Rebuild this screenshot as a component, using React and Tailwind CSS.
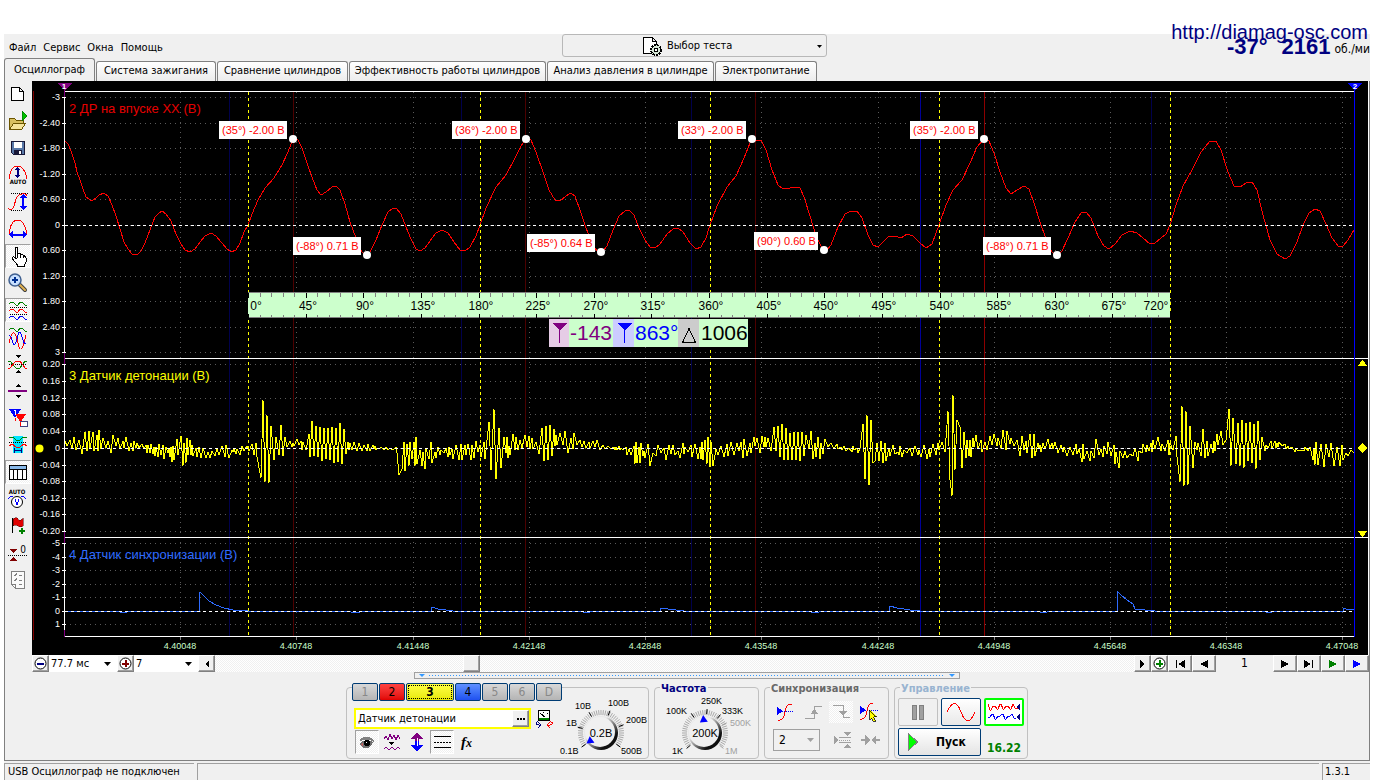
import React from "react";

const MENU = ["Файл", "Сервис", "Окна", "Помощь"];

const TABS = [
  { label: "Осциллограф", width: "w-[91px]" },
  { label: "Система зажигания", width: "w-[120px]" },
  { label: "Сравнение цилиндров", width: "w-[131px]" },
  { label: "Эффективность работы цилиндров", width: "w-[197px]" },
  { label: "Анализ давления в цилиндре", width: "w-[167px]" },
  { label: "Электропитание", width: "w-[102px]" },
];

const GRID_X = [180, 296, 413, 529, 645, 761, 878, 994, 1110, 1226, 1342];

const SCALES = [
  {
    ys: [97, 123, 148, 174, 199, 225, 250, 276, 301, 327, 352],
    labels: ["-3", "-2.40", "-1.80", "-1.20", "-0.60", "0", "0.60", "1.20", "1.80", "2.40", "3"],
    zero: 225,
  },
  {
    ys: [364, 381, 398, 414, 431, 448, 465, 481, 498, 514, 531],
    labels: ["0.20", "0.16", "0.12", "0.08", "0.04", "0", "-0.04", "-0.08", "-0.12", "-0.16", "-0.20"],
    zero: 448,
  },
  {
    ys: [543, 557, 570, 584, 597, 611, 624],
    labels: ["-5", "-4", "-3", "-2", "-1", "0", "1"],
    zero: 611,
  },
];

const TIMES = [
  "4.40048", "4.40748", "4.41448", "4.42148", "4.42848", "4.43548",
  "4.44248", "4.44948", "4.45648", "4.46348", "4.47048",
];

const PRESSURE = [
  [65, 141], [68, 144], [71, 151], [75, 163], [77, 172], [80, 180], [83, 189], [86, 197], [90, 200], [92, 201],
  [96, 198], [99, 195], [104, 193], [108, 196], [112, 205], [116, 216], [120, 229], [124, 242], [128, 249],
  [132, 254], [137, 255], [141, 251], [145, 243], [150, 230], [155, 217], [159, 213], [162, 211], [166, 214],
  [171, 221], [176, 234], [181, 244], [185, 250], [190, 252], [195, 249], [200, 242], [205, 236], [211, 233],
  [216, 236], [222, 243], [227, 249], [231, 252], [236, 250], [240, 243], [244, 232], [248, 225], [252, 214],
  [258, 200], [265, 188], [274, 178], [282, 165], [288, 152], [293, 139], [298, 140], [302, 148], [307, 163],
  [312, 177], [317, 190], [321, 195], [326, 192], [332, 187], [336, 186], [340, 190], [345, 204], [350, 222],
  [356, 238], [362, 252], [366, 256], [370, 252], [376, 240], [382, 225], [388, 212], [392, 209], [396, 208],
  [401, 214], [406, 227], [411, 239], [416, 249], [420, 251], [425, 248], [430, 241], [436, 233], [442, 230],
  [448, 233], [454, 242], [460, 250], [465, 251], [470, 247], [476, 236], [480, 225], [486, 208], [496, 187],
  [506, 175], [514, 160], [521, 146], [526, 139], [531, 140], [536, 152], [543, 172], [549, 190], [555, 200],
  [560, 201], [566, 196], [571, 193], [575, 196], [580, 210], [586, 228], [592, 243], [597, 251], [602, 252],
  [607, 246], [613, 230], [619, 216], [625, 211], [629, 210], [634, 215], [639, 228], [645, 240], [650, 247],
  [655, 248], [660, 244], [667, 234], [673, 229], [678, 228], [683, 232], [690, 243], [696, 249], [701, 247],
  [706, 238], [710, 225], [717, 206], [727, 187], [736, 176], [744, 158], [750, 143], [753, 140], [761, 140],
  [766, 150], [772, 170], [778, 185], [783, 189], [790, 188], [795, 187], [800, 188], [804, 197], [810, 216],
  [816, 236], [822, 248], [826, 251], [831, 245], [838, 227], [845, 214], [851, 211], [857, 211], [862, 218],
  [868, 235], [873, 245], [878, 247], [883, 242], [889, 236], [895, 236], [901, 238], [907, 234], [913, 236],
  [920, 243], [926, 248], [932, 244], [939, 225], [946, 205], [953, 190], [962, 180], [970, 163], [977, 147],
  [984, 139], [989, 141], [994, 153], [1000, 172], [1006, 188], [1011, 194], [1017, 190], [1024, 186],
  [1029, 189], [1034, 203], [1040, 222], [1046, 239], [1052, 252], [1057, 256], [1062, 251], [1068, 238],
  [1075, 222], [1081, 213], [1086, 212], [1091, 218], [1098, 236], [1104, 246], [1109, 249], [1115, 244],
  [1122, 235], [1130, 231], [1137, 233], [1143, 238], [1150, 244], [1155, 243], [1161, 238], [1166, 234],
  [1170, 225], [1176, 205], [1183, 186], [1192, 170], [1201, 152], [1210, 141], [1216, 141], [1221, 150],
  [1228, 172], [1234, 186], [1240, 187], [1246, 183], [1252, 182], [1257, 190], [1263, 215], [1270, 240],
  [1277, 254], [1285, 259], [1290, 256], [1297, 242], [1303, 225], [1309, 213], [1315, 209], [1320, 211],
  [1326, 224], [1332, 238], [1338, 246], [1343, 246], [1348, 240], [1354, 230],
];

// [x, upper y, lower y] of the knock signal
const KNOCK = [
  [65, 440, 449], [75, 436, 450], [85, 430, 455], [98, 430, 452], [110, 433, 458], [120, 437, 450],
  [130, 438, 452], [140, 444, 450], [150, 443, 456], [165, 442, 460], [175, 440, 464], [180, 434, 466],
  [190, 440, 465], [200, 447, 458], [215, 448, 459], [227, 442, 460], [232, 447, 455], [248, 444, 456],
  [255, 438, 455], [259, 430, 460], [261, 412, 478], [268, 412, 484], [271, 425, 480],
  [275, 432, 460], [283, 421, 459], [288, 440, 450], [300, 438, 450], [308, 438, 450], [310, 418, 462],
  [315, 422, 462], [330, 423, 464], [343, 422, 470], [346, 426, 458], [348, 442, 452], [355, 442, 451],
  [390, 447, 451], [398, 446, 454], [400, 441, 475], [407, 444, 470], [416, 438, 468], [430, 442, 468],
  [440, 446, 457], [460, 442, 464], [480, 442, 456], [487, 432, 460], [489, 420, 470], [496, 412, 479],
  [499, 426, 468], [505, 438, 462], [517, 432, 453], [525, 433, 455], [535, 440, 452], [541, 434, 456],
  [543, 420, 461], [549, 421, 463], [555, 430, 455], [567, 427, 453], [576, 432, 453], [583, 441, 451],
  [600, 440, 450], [610, 446, 450], [625, 446, 453], [636, 441, 466], [645, 442, 466], [652, 446, 465],
  [660, 442, 460], [675, 444, 460], [692, 444, 458], [704, 440, 465], [715, 436, 466], [720, 446, 455],
  [730, 441, 458], [738, 436, 462], [746, 436, 463], [752, 431, 456], [760, 435, 453], [767, 430, 452],
  [776, 422, 456], [783, 424, 466], [792, 431, 463], [801, 429, 461], [812, 433, 459], [820, 439, 459],
  [830, 440, 450], [845, 446, 453], [860, 446, 453], [862, 424, 466], [866, 415, 484], [870, 418, 485],
  [873, 422, 463], [877, 440, 462], [883, 434, 467], [888, 442, 463], [900, 446, 460], [912, 446, 456],
  [920, 447, 460], [935, 440, 457], [946, 442, 457], [948, 412, 470], [956, 410, 486],
  [961, 424, 474], [965, 434, 460], [975, 434, 455], [980, 440, 456], [993, 434, 450], [1007, 430, 450],
  [1015, 431, 453], [1022, 432, 456], [1032, 429, 463], [1040, 439, 453], [1050, 439, 449], [1060, 443, 458],
  [1070, 444, 455], [1080, 443, 461], [1090, 440, 467], [1100, 440, 465], [1109, 440, 460], [1117, 446, 468],
  [1130, 448, 463], [1145, 443, 458], [1158, 438, 455], [1170, 437, 459], [1177, 434, 462], [1180, 414, 480],
  [1187, 411, 486], [1192, 426, 475], [1196, 440, 455], [1202, 422, 461], [1210, 440, 456],
  [1220, 431, 450], [1227, 438, 456], [1229, 412, 468], [1240, 420, 468], [1247, 417, 468], [1259, 420, 472],
  [1262, 426, 455], [1266, 441, 452], [1280, 441, 449], [1290, 446, 451], [1300, 448, 454], [1310, 445, 451],
  [1316, 441, 471], [1320, 444, 472], [1332, 440, 465], [1343, 446, 468], [1354, 446, 457],
];

// tallest strokes of each knock
const PEAKS = [
  [261, 478], [263, 400], [265, 482], [267, 415], [269, 483], [271, 426],
  [489, 422], [491, 470], [494, 409], [496, 479], [499, 428], [501, 468],
  [863, 424], [865, 479], [867, 415], [869, 485], [871, 420], [873, 463],
  [948, 411], [950, 480], [953, 395], [955, 470], [957, 420], [952, 496],
  [1180, 482], [1182, 406], [1184, 486], [1186, 411], [1188, 485], [1190, 426],
  [1229, 409], [1231, 466], [1233, 418], [399, 475],
];

const YELLOW_X = [248, 480, 710, 939, 1170];

const MARKS = [
  { x: 219, y: 121, dot: [293, 139], text: "(35°) -2.00 В" },
  { x: 452, y: 121, dot: [526, 139], text: "(36°) -2.00 В" },
  { x: 678, y: 121, dot: [752, 139], text: "(33°) -2.00 В" },
  { x: 910, y: 121, dot: [984, 139], text: "(35°) -2.00 В" },
  { x: 293, y: 237, dot: [367, 255], text: "(-88°) 0.71 В" },
  { x: 527, y: 234, dot: [601, 252], text: "(-85°) 0.64 В" },
  { x: 754, y: 232, dot: [824, 250], text: "(90°) 0.60 В" },
  { x: 983, y: 237, dot: [1057, 255], text: "(-88°) 0.71 В" },
];

const toPoints = (list) => list.map((p) => p.join(",")).join(" ");

const knockPoints = () => {
  const out = [];
  let seg = 0;
  let seed = 7;
  let up = true;
  let x = 65;
  while (x <= 1354) {
    while (seg < KNOCK.length - 2 && KNOCK[seg + 1][0] < x) seg++;
    const a = KNOCK[seg];
    const b = KNOCK[seg + 1];
    const t = Math.min(1, (x - a[0]) / (b[0] - a[0]));
    const top = a[1] + (b[1] - a[1]) * t;
    const bottom = a[2] + (b[2] - a[2]) * t;
    const mid = (top + bottom) / 2;
    const burst = bottom - top > 30;
    seed = (seed * 16807) % 2147483647;
    const r = (seed % 1000) / 1000;
    const k = burst ? 0.7 + 0.3 * r : 0.15 + 0.95 * r;
    const at = x;
    const inPeak = PEAKS.some((p) => Math.abs(p[0] - at) < 2);
    if (!inPeak) out.push([x, Math.round(up ? mid - (mid - top) * k : mid + (bottom - mid) * k)]);
    up = !up;
    seed = (seed * 16807) % 2147483647;
    x += burst ? 2 : 1 + (seed % 3);
  }
  return toPoints([...out, ...PEAKS].sort((p, q) => p[0] - q[0]));
};

const VLine = ({ x, color, y1 = 92, y2 = 636, dash }) => (
  <line x1={x + 0.5} x2={x + 0.5} y1={y1} y2={y2} stroke={color} strokeDasharray={dash} />
);

const HLine = ({ y, color, x1 = 65, x2 = 1354, dash }) => (
  <line x1={x1} x2={x2} y1={y + 0.5} y2={y + 0.5} stroke={color} strokeDasharray={dash} />
);

function Ruler() {
  const minor = [];
  for (let i = 0; i <= 80; i++) minor.push(Math.round(248 + i * 11.525));
  return (
    <g>
      <rect x="248" y="292" width="922" height="26" fill="#ccffcc" />
      <HLine y={292} x1={248} x2={1170} color="#808080" />
      <HLine y={317} x1={248} x2={1170} color="#808080" />
      {minor.map((x, i) => (
        <g key={i}>
          <VLine x={x} y1={293} y2={i % 5 ? 297 : 298} color={i % 5 ? "#808080" : "#000"} />
          <VLine x={x} y1={i % 5 ? 315 : 314} y2={318} color={i % 5 ? "#808080" : "#000"} />
        </g>
      ))}
      <g fontSize="12" fill="#000" textAnchor="middle">
        {minor.filter((x, i) => i % 5 === 0).map((x, i) => (
          <text key={i} x={i === 0 ? 256 : i === 16 ? 1156 : x + 2} y="310">
            {i * 45}°
          </text>
        ))}
      </g>
    </g>
  );
}

function Readout() {
  return (
    <g fontSize="21">
      <rect x="549" y="319" width="199" height="28" fill="#ccffcc" />
      <rect x="549" y="319" width="20" height="28" fill="#e6cce6" />
      <rect x="613" y="319" width="21" height="28" fill="#ccccff" />
      <path d="M552 323h15l-7 7v13h-1v-13z" fill="#800080" />
      <text x="570" y="340" fill="#800080">-143</text>
      <path d="M617 323h15l-7 7v13h-1v-13z" fill="#0000ff" />
      <text x="635" y="340" fill="#0000ff">863°</text>
      <rect x="678" y="319" width="21" height="28" fill="#cccccc" />
      <path d="M682.500 342.500h13l-6.500-14z" fill="none" stroke="#000" />
      <text x="701" y="340" fill="#000">1006</text>
    </g>
  );
}

function Chart() {
  return (
    <svg
      viewBox="32 81 1336 574"
      className="block h-auto w-full bg-black font-['Liberation_Sans',sans-serif]"
      shapeRendering="crispEdges"
      role="img"
      aria-label="Осциллограмма"
    >
      {SCALES.map((s) => s.ys.map((y) => <HLine key={y} y={y} x1={70} color="#5a5a5a" dash="1 4" />))}
      {GRID_X.map((x) => <VLine key={x} x={x} color="#5a5a5a" dash="1 4" />)}
      {[229, 461, 691, 920, 1151].map((x) => (
        <VLine key={x} x={x} color={x === 920 ? "#000099" : "#00004c"} />
      ))}
      {[293, 525, 755, 984].map((x) => (
        <VLine key={x} x={x} color={x === 984 ? "#8c0000" : "#4c0000"} />
      ))}
      <VLine x={33} y1={91} y2={640} color="#800000" />

      <polyline
        points="65,611 119,611 120,612 127,612 128,611 199,611 200,592 204,596 209,601 216,605 224,608 233,610 248,611 350,611 351,612 360,612 361,611 431,611 432,607 438,609 446,610 453,611 582,611 583,612 590,612 591,611 660,611 661,608 668,609 676,610 684,611 810,611 811,612 819,612 820,611 889,611 890,606 897,608 904,609 910,610 920,611 1039,611 1040,612 1047,612 1048,611 1117,611 1117,591 1121,595 1127,600 1133,604 1135,609 1155,611 1265,611 1266,612 1272,612 1273,611 1343,611 1343,608 1346,609 1354,609"
        fill="none"
        stroke="#2e6bff"
      />
      <polyline points={toPoints(PRESSURE)} fill="none" stroke="#ff0000" />
      <polyline points={knockPoints()} fill="none" stroke="#ffff00" strokeLinejoin="bevel" />

      {SCALES.map((s) => <HLine key={s.zero} y={s.zero} color="#fff" dash="3 3" />)}
      {YELLOW_X.map((x) => <VLine key={x} x={x} color="#ffff00" dash="3 3" />)}

      <HLine y={91} x1={64} color="#fff" />
      <HLine y={358} x1={64} x2={1368} color="#fff" />
      <HLine y={537} x1={64} x2={1368} color="#fff" />
      <HLine y={636} x1={64} color="#fff" />
      <VLine x={64} color="#fff" />
      <VLine x={64} y1={84} y2={97} color="#800080" />
      <VLine x={64} y1={352} y2={364} color="#800080" />
      <VLine x={64} y1={532} y2={543} color="#800080" />
      <VLine x={64} y1={630} y2={637} color="#800080" />
      <line x1="1354.5" x2="1354.5" y1="84" y2="637" stroke="#0000ff" />
      <path d="M57 83h15l-7 7h-1z" fill="#800080" />
      <path d="M1347 83h15l-7 7h-1z" fill="#0000ff" />
      <g fontSize="8" fontWeight="700" fill="#fff" textAnchor="middle">
        <text x="64" y="89">1</text>
        <text x="1355" y="89">2</text>
      </g>

      <g fontSize="9" fill="#fff" textAnchor="end">
        {SCALES.map((s) =>
          s.ys.map((y, i) => (
            <g key={y}>
              <HLine y={y} x1={62} x2={66} color="#fff" />
              <text x="60" y={y + 3}>{s.labels[i]}</text>
            </g>
          )),
        )}
      </g>
      <g fontSize="9" fill="#ccffcc" textAnchor="middle">
        {GRID_X.map((x, i) => (
          <g key={x}>
            <VLine x={x} y1={637} y2={640} color="#808080" />
            <text x={x} y="649">{TIMES[i]}</text>
          </g>
        ))}
      </g>

      <g fontSize="13">
        <text x="69" y="113" fill="#e60000">2 ДР на впуске XX (В)</text>
        <text x="69" y="380" fill="#ffff00">3 Датчик детонации (В)</text>
        <text x="69" y="559" fill="#2e6bff">4 Датчик синхронизации (В)</text>
      </g>

      {MARKS.map((m) => (
        <g key={m.x}>
          <rect x={m.x} y={m.y} width={m.text.length === 12 ? 64 : 68} height="18" fill="#fff" />
          <text x={m.x + 3} y={m.y + 13} fontSize="11" fill="#ff0000">{m.text}</text>
          <circle cx={m.dot[0]} cy={m.dot[1]} r="4" fill="#fff" shapeRendering="auto" />
        </g>
      ))}

      <Ruler />
      <Readout />

      <circle cx="39.500" cy="448.500" r="4" fill="#ffff00" shapeRendering="auto" />
      <path d="M1358 366h9l-4-6h-1z" fill="#ffff00" />
      <path d="M1362.500 443l5 5-5 5-5-5z" fill="#ffff00" />
      <path d="M1358 531h9l-4 6h-1z" fill="#ffff00" />
    </svg>
  );
}

const WAVE = "l2-2h2l3 3h2l2-3h2l3 3h2";

const TOOLS = [
  {
    name: "Новый",
    art: <path d="M5.500 5.500h8l4 4v9h-12zM13.500 5.500v4h4" fill="#fff" stroke="#000" />,
  },
  {
    name: "Открыть",
    art: (
      <>
        <path d="M3.500 20.500v-11h5l2 2h7v3" fill="#d8c060" stroke="#6b5500" />
        <path d="M3.500 20.500l4-6h12l-4 6z" fill="#f5e49a" stroke="#6b5500" />
        <path d="M16 2l5 5-5 5z" fill="#00c000" stroke="#006000" strokeWidth="0.500" />
      </>
    ),
  },
  {
    name: "Сохранить",
    art: (
      <>
        <path d="M5.500 5.500h13v13h-11l-2-2z" fill="#5878a8" stroke="#181838" />
        <rect x="8" y="6" width="8" height="6" fill="#fff" />
        <rect x="8" y="14" width="8" height="4" fill="#181838" />
        <rect x="13" y="15" width="2" height="3" fill="#fff" />
      </>
    ),
  },
  {
    name: "Авто масштаб",
    art: (
      <>
        <path d="M3.500 16v-3q2-10 8-10t9 10v3" fill="none" stroke="#f00" />
        <path d="M11.500 4l3 3h-2v5h2l-3 3-3-3h2v-5h-2z" fill="#000080" />
        <text x="12" y="21" fontSize="6" fontWeight="700" textAnchor="middle">AUTO</text>
      </>
    ),
  },
  {
    name: "По вертикали",
    art: (
      <>
        <path d="M5 3.500h17M5 20.500h11" stroke="#000" strokeDasharray="1 1" />
        <path d="M2 18q2 3 4 1c4-3 2-14 10-15q4-1 5 2" fill="none" stroke="#f00" />
        <path d="M17 4l4 4h-3v8h3l-4 4-4-4h3v-8h-3z" fill="#00f" />
      </>
    ),
  },
  {
    name: "По горизонтали",
    art: (
      <>
        <path d="M3.500 17v-3q2-11 8-11t9 11v3" fill="none" stroke="#f00" />
        <path d="M3 17.500l4-4v3h10v-3l4 4-4 4v-3h-10v3z" fill="#00f" />
      </>
    ),
  },
  {
    name: "Рука",
    pressed: true,
    art: (
      <path
        d="M9.500 14.500v-10q0-1 1-1t1 1v6q0-1 1.500-1t1.500 1.500q0-1 1.500-.5t1.500 1.500q0-1 1 0t1.500 2v4l-1.500 3v1h-7v-1l-5-6q-1-1.500.5-2t3 1.500zM11.500 10v4M14.500 11v3M17.500 12v2"
        fill="#fff"
        stroke="#000"
      />
    ),
  },
  {
    name: "Увеличить",
    art: (
      <g shapeRendering="auto">
        <path d="M13 13l6 6" stroke="#404040" strokeWidth="4" strokeLinecap="round" />
        <path d="M14 14l5 5" stroke="#e0b050" strokeWidth="2" strokeLinecap="round" />
        <circle cx="9" cy="9" r="6" fill="#c8e0ff" stroke="#406090" strokeWidth="1.500" />
        <path d="M9 6v6M6 9h6" stroke="#003090" strokeWidth="2" />
      </g>
    ),
  },
  {
    name: "Разделить каналы",
    pressed: true,
    art: (
      <g fill="none">
        <path d={"M3 6" + WAVE} stroke="#008000" />
        <path d="M4 9.500h17M4 16.500h17" stroke="#000" strokeDasharray="1 1" />
        <path d={"M3 13" + WAVE} stroke="#f00" />
        <path d={"M3 20" + WAVE} stroke="#00f" />
      </g>
    ),
  },
  {
    name: "Совместить каналы",
    art: (
      <g fill="none">
        <path d={"M3 5" + WAVE} stroke="#008000" />
        <path d="M3 18c3-14 6-14 9 0s5 3 8-8" stroke="#f00" />
        <path d="M3 11c3-2 3 11 6 8s3-17 6-10 2 10 5 10" stroke="#00f" />
      </g>
    ),
  },
  {
    name: "Наложить",
    art: (
      <g fill="none">
        <path d="M9 3h6l-3 3zM9 21h6l-3-3z" fill="#000" />
        <path d="M3 12.500h18" stroke="#000" strokeDasharray="1 1" />
        <path d="M2 9h2l6 7h4l5-7h2" stroke="#008000" />
        <path d="M2 16h2l6-7h4l5 7h2" stroke="#f00" />
      </g>
    ),
  },
  {
    name: "Сдвиг",
    art: (
      <>
        <path d="M9 8h6l-3-3zM9 16h6l-3 3z" fill="#000" />
        <rect x="2" y="11" width="19" height="2" fill="#800080" />
      </>
    ),
  },
  {
    name: "Маркеры",
    art: (
      <>
        <path d="M3 3h12l-6 9z" fill="#00f" />
        <path d="M9 8h11l-5.500 8z" fill="#f00" />
        <path d="M8 4.500h1.500v4" fill="none" stroke="#fff" />
        <rect x="14.500" y="15.500" width="7" height="5" fill="#fff" stroke="#404080" />
        <path d="M9.500 12v3M14 16v4" stroke="#f00" />
      </>
    ),
  },
  {
    name: "Фаза",
    art: (
      <g fill="none">
        <rect x="7" y="3" width="10" height="17" fill="#00e5ff" />
        <path d="M3 4h4l3 3h4l3-3h4" stroke="#008000" />
        <path d="M3 9.500h18" stroke="#000" strokeDasharray="1 1" />
        <path d="M3 13l3-2 4 3h4l4-3 3 2" stroke="#f00" />
        <path d="M8 17.500h8M8.500 15v5M15.500 15v5" stroke="#000080" />
      </g>
    ),
  },
  {
    name: "Таблица",
    pressed: true,
    art: (
      <>
        <rect x="3.500" y="5.500" width="17" height="14" fill="#fff" stroke="#000" />
        <rect x="4" y="6" width="16" height="3" fill="#88b8e8" />
        <path d="M3 9.500h17M7.500 9v10M11.500 9v10M16.500 9v10" stroke="#000" />
      </>
    ),
  },
  {
    name: "Авто вольтметр",
    art: (
      <>
        <text x="11" y="7" fontSize="6" fontWeight="700" textAnchor="middle">AUTO</text>
        <path d="M2 12q2-3 5-3M20 12q-2-3-5-3" fill="none" stroke="#00f" />
        <circle cx="11" cy="15" r="5.500" fill="#fff" stroke="#000" shapeRendering="auto" />
        <path d="M9 12.500l2 5 2-5" fill="none" stroke="#00f" />
      </>
    ),
  },
  {
    name: "Флаг",
    art: (
      <>
        <path d="M6.500 4v15" stroke="#000" />
        <path d="M7 5q3-3 5 0t5-1v8q-3 2-5 0t-5 0z" fill="#e00000" stroke="#400" strokeWidth="0.500" />
        <path d="M15.500 14v6M12.500 17h6" stroke="#008000" strokeWidth="2" />
      </>
    ),
  },
  {
    name: "Ноль",
    art: (
      <>
        <path d="M3 8h8l-4 4zM3 20h8l-4-4z" fill="#800000" />
        <path d="M2 14.500h19" stroke="#000" strokeDasharray="1 1" />
        <text x="17" y="12" fontSize="10" textAnchor="middle">0</text>
      </>
    ),
  },
  {
    name: "Список",
    art: (
      <path
        d="M5.500 3.500h13v17h-9l-4-4zM5.500 16.500h4v4M8 7l1 1 2-3M8 12l1 1 2-3M13 7.500h3M13 12.500h3M13 16.500h3"
        fill="#fafafa"
        stroke="#808080"
      />
    ),
  },
];

const SUNKEN =
  "border border-t-[#a0a0a0] border-l-[#a0a0a0] border-r-white border-b-white bg-[repeating-conic-gradient(#fff_0_25%,#f0f0f0_0_50%)] bg-[length:2px_2px]";

const Icon = ({ w = 24, h = 24, children }) => (
  <svg width={w} height={h} viewBox={`0 0 ${w} ${h}`} shapeRendering="crispEdges" className="shrink-0" aria-hidden="true">
    {children}
  </svg>
);

function Toolbar() {
  return (
    <div className="flex w-[27px] shrink-0 flex-col gap-[3px] pt-px pr-px">
      {TOOLS.map((t) => (
        <button
          key={t.name}
          type="button"
          aria-label={t.name}
          className={
            "flex h-6 items-center justify-center " + (t.pressed ? SUNKEN : "")
          }
        >
          <Icon>{t.art}</Icon>
        </button>
      ))}
    </div>
  );
}

const RaisedButton = ({ label, width = "w-6", children }) => (
  <button
    type="button"
    aria-label={label}
    className={
      "flex h-[17px] shrink-0 items-center justify-center border border-t-white border-l-white border-r-[#808080] border-b-[#808080] bg-[#f0f0f0] shadow-[inset_-1px_-1px_0_#a0a0a0] " + width
    }
  >
    {children}
  </button>
);

const RoundSign = ({ color, plus }) => (
  <Icon w={13} h={13}>
    <circle cx="6.500" cy="6.500" r="5.500" fill="#fff" stroke="#000" shapeRendering="auto" />
    <path d={plus ? "M3 6.500h7M6.500 3v7" : "M3 6.500h7"} stroke={color} strokeWidth="2" />
  </Icon>
);

function Combo({ label, value, className }) {
  return (
    <div className={"relative shrink-0 " + className}>
      <select
        aria-label={label}
        defaultValue={value}
        className="h-[17px] w-full appearance-none bg-white px-[2px] text-[11px] leading-[17px]"
      >
        <option>{value}</option>
      </select>
      <svg width="7" height="4" className="pointer-events-none absolute top-[7px] right-[6px]" aria-hidden="true">
        <path d="M0 0h7l-3.500 4z" />
      </svg>
    </div>
  );
}

function Transport() {
  return (
    <div className="flex h-[17px]">
      <RaisedButton label="Уменьшить" width="w-[17px]"><RoundSign color="#000080" /></RaisedButton>
      <Combo label="Развёртка" value="77.7 мс" className="w-[68px]" />
      <RaisedButton label="Увеличить" width="w-[17px]"><RoundSign color="#800000" plus /></RaisedButton>
      <Combo label="Масштаб" value="7" className="w-16" />
      <RaisedButton label="Влево" width="w-[17px]">
        <Icon w={5} h={8}><path d="M5 0v8l-4-4z" /></Icon>
      </RaisedButton>
      <div className="flex min-w-0 flex-1 bg-[repeating-conic-gradient(#fff_0_25%,#f0f0f0_0_50%)] bg-[length:2px_2px]">
        <div className="w-[27%] shrink-0" />
        <RaisedButton label="Прокрутка" width="w-[17px]" />
      </div>
      <RaisedButton label="Вправо" width="w-[17px]">
        <Icon w={5} h={8}><path d="M0 0v8l4-4z" /></Icon>
      </RaisedButton>
      <RaisedButton label="Добавить" width="w-[17px]"><RoundSign color="#008000" plus /></RaisedButton>
      <RaisedButton label="В начало">
        <Icon w={12} h={8}><path d="M2 0h1v8h-1zM11 0v8l-7-4z" /></Icon>
      </RaisedButton>
      <RaisedButton label="Назад">
        <Icon w={8} h={8}><path d="M8 0v8l-8-4z" /></Icon>
      </RaisedButton>
      <output className="w-[57px] shrink-0 text-center text-[12px] leading-[17px]">1</output>
      <RaisedButton label="Вперёд">
        <Icon w={8} h={8}><path d="M0 0v8l8-4z" /></Icon>
      </RaisedButton>
      <RaisedButton label="В конец">
        <Icon w={12} h={8}><path d="M9 0h1v8h-1zM1 0v8l7-4z" /></Icon>
      </RaisedButton>
      <RaisedButton label="Воспроизвести">
        <Icon w={8} h={8}><path d="M0 0v8l8-4z" fill="#008000" /></Icon>
      </RaisedButton>
      <RaisedButton label="Непрерывно">
        <Icon w={8} h={8}><path d="M0 0v8l8-4z" fill="#0000ff" /></Icon>
      </RaisedButton>
    </div>
  );
}

const CHANNELS = [
  { id: "1", cls: "w-[26px] bg-linear-to-b from-[#d8d8d8] to-[#b4b4b4] text-[#888]" },
  { id: "2", cls: "w-[26px] bg-linear-to-b from-[#ff4040] to-[#e00000] text-black" },
  { id: "3", cls: "w-12 bg-linear-to-b from-[#ffff40] to-[#e8e800] text-black font-bold outline-1 -outline-offset-3 outline-dotted outline-black" },
  { id: "4", cls: "w-[26px] bg-linear-to-b from-[#6090ff] to-[#2050f0] text-black" },
  { id: "5", cls: "w-[26px] bg-linear-to-b from-[#d8d8d8] to-[#b4b4b4] text-[#888]" },
  { id: "6", cls: "w-[26px] bg-linear-to-b from-[#d8d8d8] to-[#b4b4b4] text-[#888]" },
  { id: "D", cls: "w-[26px] bg-linear-to-b from-[#d8d8d8] to-[#b4b4b4] text-[#888]" },
];

const GROUP = "flex h-18 rounded-[4px] border border-[#c0c0c0]";

function Knob({ cx, cy, r, value, from, to, pointer, labels, width }) {
  const ticks = [];
  for (let a = from; a <= to; a += 6) ticks.push(a);
  const polar = (a, d) => [cx + d * Math.sin((a * Math.PI) / 180), cy - d * Math.cos((a * Math.PI) / 180)];
  const [px, py] = polar(pointer, r - 3);
  return (
    <svg
      width={width}
      height="70"
      viewBox={`0 0 ${width} 70`}
      className="shrink-0 overflow-visible font-['Liberation_Sans',sans-serif]"
      role="img"
      aria-label={value}
    >
      <defs>
        <linearGradient id={"edge" + width} x1="0" y1="0" x2="1" y2="1">
          <stop offset="0.350" stopColor="#e8e8e8" />
          <stop offset="0.750" stopColor="#101010" />
        </linearGradient>
      </defs>
      {ticks.map((a) => {
        const [x1, y1] = polar(a, r + 1);
        const [x2, y2] = polar(a, r + 6);
        return <line key={a} x1={x1} y1={y1} x2={x2} y2={y2} stroke="#a8a8a8" />;
      })}
      {labels.map((l) => {
        const [x1, y1] = polar(l.a, r + 2);
        const [x2, y2] = polar(l.a, r + 7);
        return (
          <g key={l.t}>
            <line x1={x1} y1={y1} x2={x2} y2={y2} stroke={l.off ? "#a0a0a0" : "#000"} />
            <text x={l.x} y={l.y} fontSize="9" fill={l.off ? "#a0a0a0" : "#000"}>{l.t}</text>
          </g>
        );
      })}
      <circle cx={cx} cy={cy} r={r} fill={`url(#edge${width})`} />
      <circle cx={cx - 1} cy={cy - 1} r={r - 2} fill="#f0f0f0" />
      <path d="M0-4l4 7h-8z" fill="#0000ff" transform={`translate(${px} ${py}) rotate(${pointer})`} />
      <text x={cx} y={cy + 4} fontSize="11" textAnchor="middle">{value}</text>
    </svg>
  );
}

function ChannelGroup() {
  return (
    <section className={GROUP + " w-[303px]"}>
      <div className="flex w-[214px] shrink-0 flex-col">
        <div className="-mt-[5px] ml-[5px] flex gap-px bg-[#f0f0f0]">
          {CHANNELS.map((c) => (
            <button
              key={c.id}
              type="button"
              className={"h-[18px] shrink-0 rounded-[2px] border border-[#003c74] text-[12px] leading-4 " + c.cls}
            >
              {c.id}
            </button>
          ))}
        </div>
        <div className="mt-[7px] ml-[7px] flex items-center gap-1">
          <div className="flex h-[21px] w-[177px] items-center border-2 border-[#ffff00] bg-white">
            <input
              aria-label="Название канала"
              defaultValue="Датчик детонации"
              className="h-[17px] min-w-0 flex-1 bg-white pl-[2px] text-[11px] outline-none"
            />
            <RaisedButton label="Выбрать датчик" width="w-[17px]">
              <Icon w={8} h={2}><path d="M0 0h2v2h-2zM3 0h2v2h-2zM6 0h2v2h-2z" /></Icon>
            </RaisedButton>
          </div>
          <button type="button" aria-label="Заменить прибор">
            <Icon w={19} h={20}>
              <path d="M3.500 1.500h11v10h-11z" fill="#fff" stroke="#000" />
              <path d="M4 9h10v2h-10z" fill="#008000" />
              <path d="M9.500 8l-3-3M5 4h1M8 3h1M12 4h1" stroke="#000" />
              <path d="M3 12q-4 3 1 4h2M3 13l3 3-3 3" fill="none" stroke="#000080" />
              <path d="M15 12q5 3 0 4h-3M15 13l-3 3 3 3" fill="none" stroke="#f00" />
            </Icon>
          </button>
        </div>
        <div className="mt-px ml-2 flex h-6 items-center gap-px">
          <button type="button" aria-label="Видимость" className={"flex h-6 w-6 items-center justify-center " + SUNKEN}>
            <Icon w={16} h={14}>
              <path d="M1 4q7-5 14 1v2q-7-4-14-1z" fill="#808080" />
              <path d="M1 8q6-5 13-1-2 6-7 6t-6-5z" fill="#707070" />
              <circle cx="8" cy="8" r="3" fill="#000" />
              <path d="M7 7h1v1h-1z" fill="#fff" />
              <path d="M1 9l3-1v3z" fill="#c06060" />
            </Icon>
          </button>
          <button type="button" aria-label="Фильтр" className="flex w-6 justify-center">
            <Icon w={18} h={18}>
              <path d="M1 6l2-3 2 4 2-6 2 5 2-4 2 5 2-5 2 4" fill="none" stroke="#800080" />
              <path d="M6 9h5l-2.500 3z" />
              <path d="M1 16l2-2 3 3 3-3 3 3 3-3 2 2" fill="none" stroke="#800080" />
            </Icon>
          </button>
          <button type="button" aria-label="Инверсия" className="flex w-6 justify-center">
            <Icon w={16} h={18}>
              <path d="M8 0l7 6h-5v4h-4v-4h-5z" fill="#800080" />
              <path d="M8 18l7-6h-5v-4h-4v4h-5z" fill="#0000ff" />
              <path d="M8 5v8" stroke="#fff" />
            </Icon>
          </button>
          <button type="button" aria-label="Линии" className={"flex h-6 w-6 items-center justify-center " + SUNKEN}>
            <Icon w={18} h={14}>
              <path d="M1 1.500h17M1 12.500h17" stroke="#000" />
              <path d="M1 7.500h17" stroke="#000" strokeDasharray="2 1" />
            </Icon>
          </button>
          <button type="button" className="w-6 pl-[6px] text-left font-['Liberation_Serif',serif] text-[15px] leading-4 font-bold italic">
            f<span className="text-[12px]">x</span>
          </button>
        </div>
      </div>
      <Knob
        cx={40}
        cy={45}
        r={17}
        width={87}
        value="0.2В"
        from={-126}
        to={126}
        pointer={-126}
        labels={[
          { t: "0.1В", a: -126, x: -1, y: 66 },
          { t: "1В", a: -76, x: 5, y: 38 },
          { t: "10В", a: -30, x: 14, y: 21 },
          { t: "100В", a: 22, x: 47, y: 18 },
          { t: "200В", a: 70, x: 65, y: 35 },
          { t: "500В", a: 126, x: 60, y: 66 },
        ]}
      />
    </section>
  );
}

const Legend = ({ children, className }) => (
  <h2 className={"-mt-[6px] ml-[5px] self-start bg-[#f0f0f0] px-px text-[11px] leading-[14px] font-bold " + className}>
    {children}
  </h2>
);

function FrequencyGroup() {
  return (
    <section className={GROUP + " w-[105px] flex-col"}>
      <Legend className="text-[#000080]">Частота</Legend>
      <div className="-mt-2">
        <Knob
          cx={50}
          cy={45}
          r={17}
          width={103}
          value="200K"
          from={-126}
          to={126}
          pointer={-6}
          labels={[
            { t: "1K", a: -130, x: 17, y: 66 },
            { t: "100K", a: -35, x: 11, y: 26 },
            { t: "250K", a: 5, x: 46, y: 16 },
            { t: "333K", a: 40, x: 67, y: 26 },
            { t: "500K", a: 65, x: 75, y: 38, off: true },
            { t: "1M", a: 130, x: 70, y: 66, off: true },
          ]}
        />
      </div>
    </section>
  );
}

function SyncGroup() {
  return (
    <section className={GROUP + " w-[125px] flex-col"}>
      <Legend className="text-[#696969]">Синхронизация</Legend>
      <div className="mt-[5px] ml-2 flex items-center gap-1">
        <button type="button" aria-label="Уровень" className="flex w-6 justify-center">
          <Icon w={18} h={20}>
            <path d="M1 5l6 4-6 4z" fill="#00f" />
            <path d="M6 9.500h12" stroke="#00f" strokeDasharray="1 1" />
            <path d="M2 18q6 1 7-8t7-7" fill="none" stroke="#f00" />
          </Icon>
        </button>
        <button type="button" aria-label="Фронт" disabled className="flex w-6 justify-center">
          <Icon w={18} h={16}>
            <path d="M1 14.500h9v-12h8" fill="none" stroke="#a0a0a0" />
            <path d="M10.500 5l4 5h-8z" fill="#a0a0a0" />
          </Icon>
        </button>
        <button
          type="button"
          aria-label="Спад"
          disabled
          className="flex h-[22px] w-6 items-center justify-center bg-[repeating-conic-gradient(#fff_0_25%,#f0f0f0_0_50%)] bg-[length:2px_2px]"
        >
          <Icon w={18} h={16}>
            <path d="M1 1.500h10v12h7" fill="none" stroke="#a0a0a0" />
            <path d="M11 12l4-5h-8z" fill="#a0a0a0" />
          </Icon>
        </button>
        <button type="button" aria-label="Указать уровень" className="flex w-6 justify-center">
          <Icon w={20} h={20}>
            <path d="M1 4l6 4-6 4z" fill="#00f" />
            <path d="M6 8.500h13" stroke="#00f" strokeDasharray="1 1" />
            <path d="M1 17q6 1 7-8t6-7" fill="none" stroke="#f00" />
            <path d="M10.500 7.500l7 7h-3l2 4-2 1-2-4-2 2z" fill="#ffff00" stroke="#000" strokeWidth="0.750" />
          </Icon>
        </button>
      </div>
      <div className="mt-[6px] ml-2 flex items-center gap-[10px]">
        <div className="relative w-[47px]">
          <select
            aria-label="Канал синхронизации"
            disabled
            className="h-[22px] w-full appearance-none border border-[#a0a0a0] bg-[#f0f0f0] pl-[5px] text-[12px] text-black opacity-100"
          >
            <option>2</option>
          </select>
          <svg width="7" height="4" className="pointer-events-none absolute top-[9px] right-[6px]" aria-hidden="true">
            <path d="M0 0h7l-3.500 4z" fill="#a0a0a0" />
          </svg>
        </div>
        <div className="flex gap-1">
          <button type="button" aria-label="Гистерезис" disabled className="flex w-6 items-center justify-center">
            <Icon w={19} h={17}>
              <path d="M1 4l5 4-5 4zM10 0h8l-4 4zM10 16h8l-4-4z" fill="#a0a0a0" />
              <path d="M6 5.500h12M6 10.500h12" stroke="#a0a0a0" />
              <path d="M6 8h12" stroke="#a0a0a0" strokeDasharray="1 1" />
            </Icon>
          </button>
          <button type="button" aria-label="Центр" disabled className="flex w-6 items-center justify-center">
            <Icon w={19} h={10}>
              <path d="M0 4h4v-4l5 5-5 5v-4h-4zM19 4h-4v-4l-5 5 5 5v-4h4z" fill="#a0a0a0" />
            </Icon>
          </button>
        </div>
      </div>
    </section>
  );
}

function ControlGroup() {
  return (
    <section className={GROUP + " w-[134px] flex-col"}>
      <Legend className="text-[#99b4d1]">Управление</Legend>
      <div className="mt-[2px] ml-[3px] flex gap-[3px]">
        <button type="button" aria-label="Пауза" disabled className="flex h-7 w-10 items-center justify-center rounded-[2px] border border-[#c0c0c0]">
          <Icon w={12} h={15}><path d="M0.500 0.500h4v14h-4zM7.500 0.500h4v14h-4z" fill="#a0a0a0" stroke="#808080" /></Icon>
        </button>
        <button type="button" aria-label="Один канал" className="flex h-7 w-10 items-center justify-center rounded-[2px] border border-[#003c74] bg-linear-to-b from-white to-[#e8e8e8]">
          <Icon w={30} h={20}><path d="M1 10C7-2 11-1 15 10s9 12 14 0" fill="none" stroke="#f00" /></Icon>
        </button>
        <button type="button" aria-label="Все каналы" className="flex h-7 w-10 items-center justify-center rounded-[2px] border-2 border-[#00ff00] bg-white">
          <Icon w={34} h={20}>
            <path d="M1 2l2 6h1l2-4h2l2 3h1l2-5h1l2 5h1l2-3h2l2 3h1l2-5 2 4h3" fill="none" stroke="#f00" />
            <path d="M1 15h2l2-3h1l2 5h1l2-3h2l2-2h1l2 5h1l2-3h2l2-2 2 4h2" fill="none" stroke="#00f" />
            <path d="M33 2v6l-4-3zM33 12v6l-4-3z" fill="#000080" />
          </Icon>
        </button>
      </div>
      <div className="mt-px ml-[3px] flex items-center">
        <button type="button" className="flex h-7 w-[83px] items-center gap-[18px] rounded-[2px] border border-[#003c74] bg-linear-to-b from-white to-[#e4e4e4] pl-[9px] text-[12px] font-bold">
          <Icon w={10} h={18}><path d="M0.500 0.500v17l9-8.500z" fill="#00ff00" stroke="#808080" /></Icon>
          Пуск
        </button>
        <output className="flex-1 pt-3 text-center text-[12px] font-bold text-[#008000]">16.22</output>
      </div>
    </section>
  );
}

export default function App() {
  return (
    <div className="min-h-screen bg-white pr-3 pl-1 font-['DejaVu_Sans_Condensed','DejaVu_Sans',sans-serif] text-[11px] text-black">
      <header className="relative z-10 flex h-[34px] justify-end pt-5 pr-[2px]">
        <a
          href="http://diamag-osc.com"
          className="font-['Liberation_Sans',sans-serif] text-[20px] leading-6 text-[#000080]"
        >
          http://diamag-osc.com
        </a>
      </header>

      <div className="bg-[#f0f0f0]">
        <div className="flex h-6">
          <nav className="flex w-[558px] shrink-0 items-center gap-[7px] pt-1 pl-[5px]">
            {MENU.map((m) => (
              <button key={m} type="button">{m}</button>
            ))}
          </nav>
          <button
            type="button"
            className="flex h-[23px] w-[265px] shrink-0 items-center rounded-[3px] border border-[#b8b8b8] pt-[2px] pr-1 pl-20"
          >
            <Icon w={20} h={20}>
              <path d="M0.500 0.500h9l4 4v12h-13zM9.500 0.500v4h4" fill="#fff" stroke="#000" />
              <circle cx="13" cy="13" r="5" fill="#d8e8d8" stroke="#000" strokeDasharray="2 1" strokeWidth="2" />
              <circle cx="13" cy="13" r="4" fill="#d8e8d8" />
              <circle cx="13" cy="13" r="2" fill="#fff" stroke="#000" />
            </Icon>
            <span className="ml-1">Выбор теста</span>
            <svg width="5" height="3" className="ml-auto" aria-hidden="true"><path d="M0 0h5l-2.500 3z" /></svg>
          </button>
          <div className="ml-auto flex items-center pt-px font-['Liberation_Sans',sans-serif] text-[22px] leading-6 font-bold whitespace-nowrap text-[#000080]">
            <span className="mr-[14px]">-37°</span>
            <span>2161</span>
            <span className="ml-1 pt-1 font-['DejaVu_Sans_Condensed','DejaVu_Sans',sans-serif] text-[12px] font-normal text-black">об./ми</span>
          </div>
        </div>

        <div className="flex h-[23px] items-end gap-px" role="tablist">
          {TABS.map((t, i) => (
            <button
              key={t.label}
              type="button"
              role="tab"
              aria-selected={i === 0}
              className={
                "shrink-0 rounded-t-[3px] border border-b-0 border-[#808080] whitespace-nowrap " +
                t.width +
                (i === 0 ? " h-[23px] bg-[#f0f0f0]" : " h-5 bg-linear-to-b from-white to-[#ececec]")
              }
            >
              {t.label}
            </button>
          ))}
        </div>

        <main className="border-r border-b border-l border-[#808080]">
          <div className="flex">
            <Toolbar />
            <div className="min-w-0 flex-1">
              <div className="border-r border-white">
                <Chart />
              </div>
              <Transport />
            </div>
          </div>

          <div className="mx-auto flex h-[7px] w-[40%] items-center gap-1 border border-[#a0a0a0] px-1">
            <svg width="6" height="3" aria-hidden="true"><path d="M0 0h6l-3 3z" fill="#3399ff" /></svg>
            <div className="h-px flex-1 bg-[repeating-linear-gradient(90deg,#3399ff_0_1px,transparent_1px_3px)]" />
            <svg width="6" height="3" aria-hidden="true"><path d="M0 0h6l-3 3z" fill="#3399ff" /></svg>
          </div>

          <div className="mt-2 mb-px flex justify-center gap-[5px]">
            <ChannelGroup />
            <FrequencyGroup />
            <SyncGroup />
            <ControlGroup />
          </div>
        </main>

        <footer className="flex h-[19px] gap-[3px] pt-[2px]">
          <span className="w-[190px] border-t border-l border-[#a0a0a0] pl-[3px] leading-4">USB Осциллограф не подключен</span>
          <span className="flex-1 border-t border-l border-[#a0a0a0]" />
          <span className="w-12 border-t border-l border-[#a0a0a0] pl-[2px] leading-4">1.3.1</span>
        </footer>
      </div>
    </div>
  );
}
